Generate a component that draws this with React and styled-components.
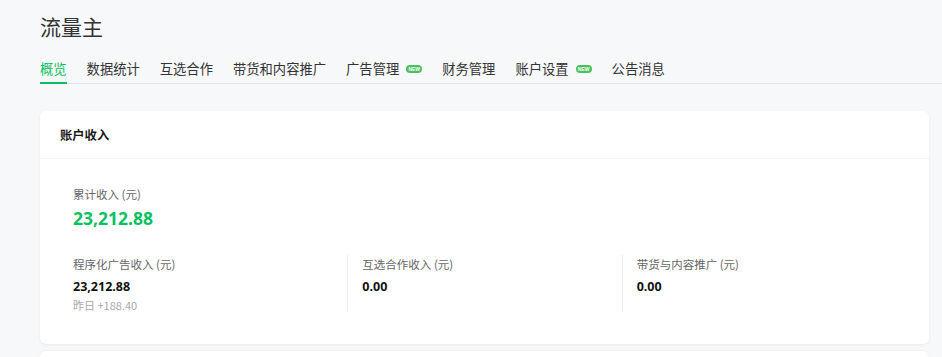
import styled, { createGlobalStyle } from 'styled-components';

const GlobalStyle = createGlobalStyle`
  html, body {
    margin: 0;
    padding: 0;
    background: #f7f8fa;
    font-family: 'Noto Sans CJK SC', 'Noto Sans', sans-serif;
    color: #1f1f1f;
  }
`;

const Page = styled.div`
  width: 942px;
  height: 357px;
  overflow: hidden;
  background: #f7f8fa;
`;

const Header = styled.header`
  padding-left: 40px;
`;

const Title = styled.h1`
  margin: 0;
  padding-top: 10px;
  height: 36px;
  font-size: 21px;
  font-weight: 400;
  line-height: 32px;
  color: #333;
`;

const Tabs = styled.nav`
  display: flex;
  gap: 20px;
  margin-top: 9px;
  border-bottom: 1px solid #e3e4e6;
`;

const Tab = styled.div`
  display: flex;
  align-items: center;
  height: 29px;
  box-sizing: border-box;
  font-size: 13.3px;
  color: ${({ $active }) => ($active ? '#07c160' : '#333')};
  border-bottom: 2px solid ${({ $active }) => ($active ? '#07c160' : 'transparent')};
  margin-bottom: -1px;
`;

const NewBadge = styled.span`
  display: inline-flex;
  align-items: center;
  justify-content: center;
  margin-left: 7px;
  width: 16px;
  height: 8px;
  border-radius: 4px;
  background: #4cbf5d;
  color: #fff;
  font-family: 'Liberation Sans', sans-serif;
  font-size: 5px;
  font-weight: 700;
  line-height: 8px;
`;

const Content = styled.main`
  padding: 27px 13px 0 40px;
`;

const Card = styled.section`
  background: #fff;
  border-radius: 6px;
  box-shadow: 0 1px 3px rgba(0, 0, 0, 0.06);
  margin-bottom: 7px;
`;

const CardHeader = styled.div`
  height: 47px;
  display: flex;
  align-items: center;
  padding-left: 20px;
  font-size: 12.3px;
  font-weight: 700;
  color: #1a1a1a;
  border-bottom: 1px solid #f0f1f2;
`;

const CardBody = styled.div`
  padding: 27px 33px 32px;
`;

const Label = styled.div`
  font-size: 11.5px;
  line-height: 16px;
  color: #666;
`;

const Total = styled.div`
  margin-top: 5px;
  font-size: 17.5px;
  font-weight: 700;
  line-height: 22px;
  color: #07c160;
  font-family: 'Noto Sans', sans-serif;
`;

const Stats = styled.div`
  display: grid;
  grid-template-columns: repeat(3, 1fr);
  margin-top: 26px;
`;

const Stat = styled.div`
  height: 56px;
  padding-top: 1px;
  padding-left: ${({ $first }) => ($first ? '0' : '14px')};
  border-left: ${({ $first }) => ($first ? 'none' : '1px solid #ececec')};
`;

const Value = styled.div`
  margin-top: 6px;
  font-size: 12.5px;
  font-weight: 700;
  line-height: 18px;
  color: #111;
  font-family: 'Noto Sans', sans-serif;
`;

const Sub = styled.div`
  margin-top: 2px;
  font-size: 11px;
  line-height: 15px;
  color: #a8a8a8;
`;

const NextCard = styled.div`
  height: 20px;
  background: #fff;
  border-radius: 6px 6px 0 0;
  box-shadow: 0 -1px 2px rgba(0, 0, 0, 0.04);
`;

const tabs = [
  { name: '概览', active: true },
  { name: '数据统计' },
  { name: '互选合作' },
  { name: '带货和内容推广' },
  { name: '广告管理', badge: true },
  { name: '财务管理' },
  { name: '账户设置', badge: true },
  { name: '公告消息' }
];

const stats = [
  { label: '程序化广告收入 (元)', value: '23,212.88', sub: '昨日 +188.40' },
  { label: '互选合作收入 (元)', value: '0.00' },
  { label: '带货与内容推广 (元)', value: '0.00' }
];

export default function App() {
  return (
    <Page>
      <GlobalStyle />
      <Header>
        <Title>流量主</Title>
        <Tabs>
          {tabs.map((tab) => (
            <Tab key={tab.name} $active={tab.active}>
              {tab.name}
              {tab.badge && <NewBadge>NEW</NewBadge>}
            </Tab>
          ))}
        </Tabs>
      </Header>
      <Content>
        <Card>
          <CardHeader>账户收入</CardHeader>
          <CardBody>
            <Label>累计收入 (元)</Label>
            <Total>23,212.88</Total>
            <Stats>
              {stats.map((stat, i) => (
                <Stat key={stat.label} $first={i === 0}>
                  <Label>{stat.label}</Label>
                  <Value>{stat.value}</Value>
                  {stat.sub && <Sub>{stat.sub}</Sub>}
                </Stat>
              ))}
            </Stats>
          </CardBody>
        </Card>
        <NextCard />
      </Content>
    </Page>
  );
}
